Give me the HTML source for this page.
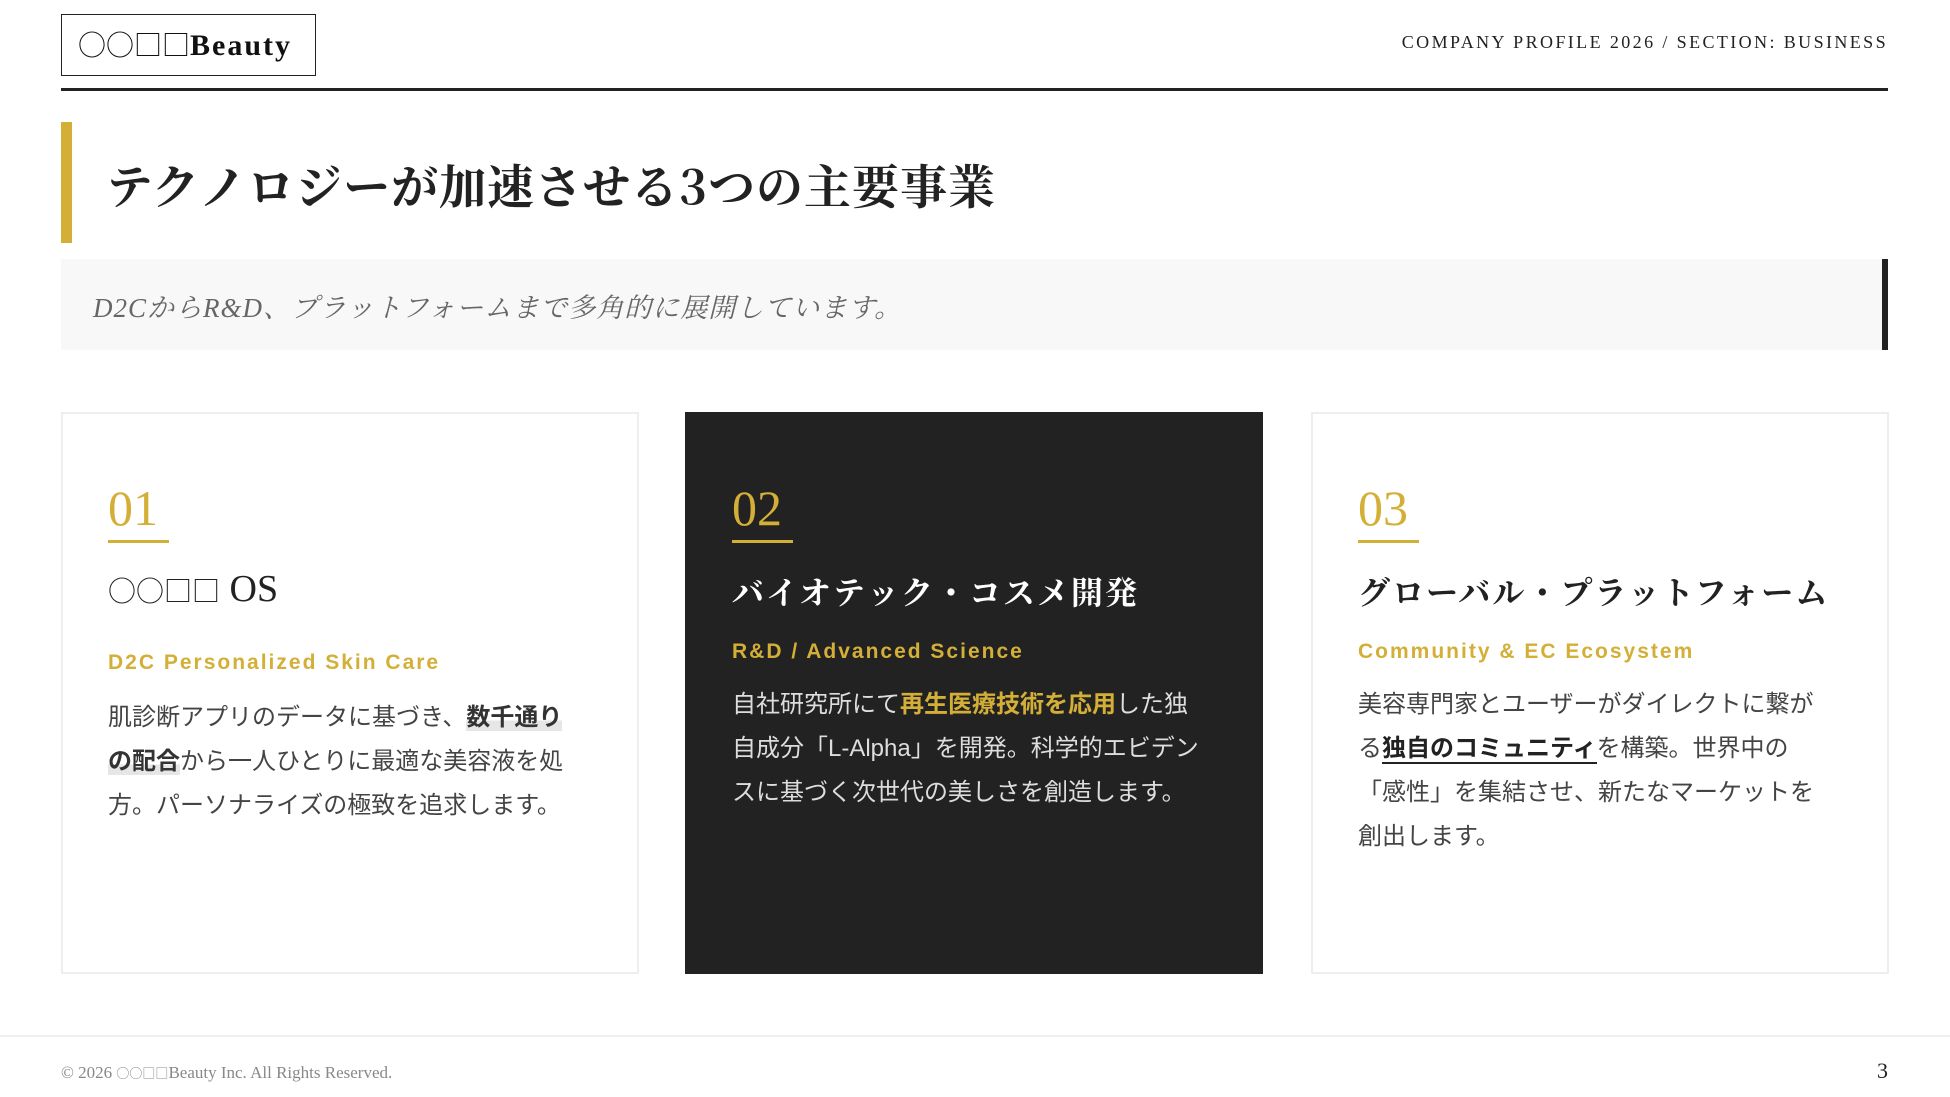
<!DOCTYPE html>
<html><head><meta charset="utf-8">
<style>
*{margin:0;padding:0;box-sizing:border-box}
body{width:1950px;height:1097px;background:#fff;position:relative;overflow:hidden;font-family:"Liberation Sans","Noto Sans CJK JP",sans-serif;color:#222}
.abs{position:absolute}
.cjk{font-family:"Noto Sans CJK JP",sans-serif;font-weight:normal}
.logo{left:61px;top:14px;width:255px;height:62px;border:1.5px solid #222;font-family:"Liberation Serif","Noto Serif CJK JP",serif;font-weight:bold;font-size:30px;letter-spacing:2px;line-height:58px;padding-left:16px;color:#111;white-space:nowrap}
.logo .cjk{font-size:28px;letter-spacing:0}
.hdr{right:62px;top:32px;font-family:"Liberation Serif",serif;font-size:18px;letter-spacing:2.4px;color:#222}
.hline{left:61px;top:88px;width:1827px;height:3px;background:#222}
.gbar{left:61px;top:122px;width:11px;height:121px;background:#d4af37}
.title{left:106px;top:151px;font-family:"Noto Serif CJK JP","Liberation Serif",serif;font-weight:bold;font-size:47px;line-height:68px;color:#222;letter-spacing:1px}
.sub{left:61px;top:259px;width:1827px;height:91px;background:#f8f8f8;border-right:6px solid #222}
.sub span{position:absolute;left:32px;top:27px;font-family:"Liberation Serif","Noto Serif CJK JP",serif;font-style:italic;font-size:27px;color:#666;letter-spacing:1px}
.card{top:412px;width:578px;height:562px;border:2px solid #eee;background:#fff}
.card.dark{background:#222;border-color:#222}
.num{position:absolute;left:45px;top:64px;font-family:"Liberation Serif",serif;font-size:50px;color:#d4af37;line-height:60px}
.uline{position:absolute;left:45px;top:126px;width:61px;height:3px;background:#d4af37}
.ct{position:absolute;left:45px;top:152px;font-family:"Noto Serif CJK JP","Liberation Serif",serif;font-size:32px;font-weight:bold;color:#222;line-height:50px;letter-spacing:2px}
.ct.os{font-family:"Liberation Serif","Noto Serif CJK JP",serif;font-weight:normal;font-size:38px;top:150px;letter-spacing:0}
.ct.os .cjk{font-size:28px}
.dark .ct{color:#fff}
.cs{position:absolute;left:45px;font-weight:bold;font-size:21px;letter-spacing:2px;color:#d4af37}
.cb{position:absolute;left:45px;font-size:24px;line-height:44px;color:#444;white-space:nowrap}
.dark .cb{color:#ddd}
.hl1{font-weight:bold;color:#333;background:linear-gradient(transparent 62%,#e6e6e6 62%)}
.hl2{font-weight:bold;color:#d4af37}
.hl3{font-weight:bold;color:#222;border-bottom:2px solid #222}
.fline{left:0;top:1035px;width:1950px;height:2px;background:#f0f0f0}
.copy{left:61px;top:1063px;font-family:"Liberation Serif",serif;font-size:17px;color:#888}
.copy .cjk{font-size:13px}
.pg{right:62px;top:1058px;font-family:"Liberation Serif",serif;font-size:22px;color:#222}
</style></head><body>
<div class="abs logo"><span class="cjk">○○□□</span>Beauty</div>
<div class="abs hdr">COMPANY PROFILE 2026 / SECTION: BUSINESS</div>
<div class="abs hline"></div>
<div class="abs gbar"></div>
<div class="abs title">テクノロジーが加速させる3つの主要事業</div>
<div class="abs sub"><span>D2CからR&amp;D、プラットフォームまで多角的に展開しています。</span></div>

<div class="abs card" style="left:61px">
<div class="num">01</div><div class="uline"></div>
<div class="ct os"><span class="cjk">○○□□</span> OS</div>
<div class="cs" style="top:237px">D2C Personalized Skin Care</div>
<div class="cb" style="top:282px">肌診断アプリのデータに基づき、<span class="hl1">数千通り<br>の配合</span>から一人ひとりに最適な美容液を処<br>方。パーソナライズの極致を追求します。</div>
</div>

<div class="abs card dark" style="left:685px">
<div class="num">02</div><div class="uline"></div>
<div class="ct">バイオテック・コスメ開発</div>
<div class="cs" style="top:226px">R&amp;D / Advanced Science</div>
<div class="cb" style="top:269px">自社研究所にて<span class="hl2">再生医療技術を応用</span>した独<br>自成分「L-Alpha」を開発。科学的エビデン<br>スに基づく次世代の美しさを創造します。</div>
</div>

<div class="abs card" style="left:1311px">
<div class="num">03</div><div class="uline"></div>
<div class="ct">グローバル・プラットフォーム</div>
<div class="cs" style="top:226px">Community &amp; EC Ecosystem</div>
<div class="cb" style="top:269px">美容専門家とユーザーがダイレクトに繋が<br>る<span class="hl3">独自のコミュニティ</span>を構築。世界中の<br>「感性」を集結させ、新たなマーケットを<br>創出します。</div>
</div>

<div class="abs fline"></div>
<div class="abs copy">© 2026 <span class="cjk">○○□□</span>Beauty Inc. All Rights Reserved.</div>
<div class="abs pg">3</div>
</body></html>
